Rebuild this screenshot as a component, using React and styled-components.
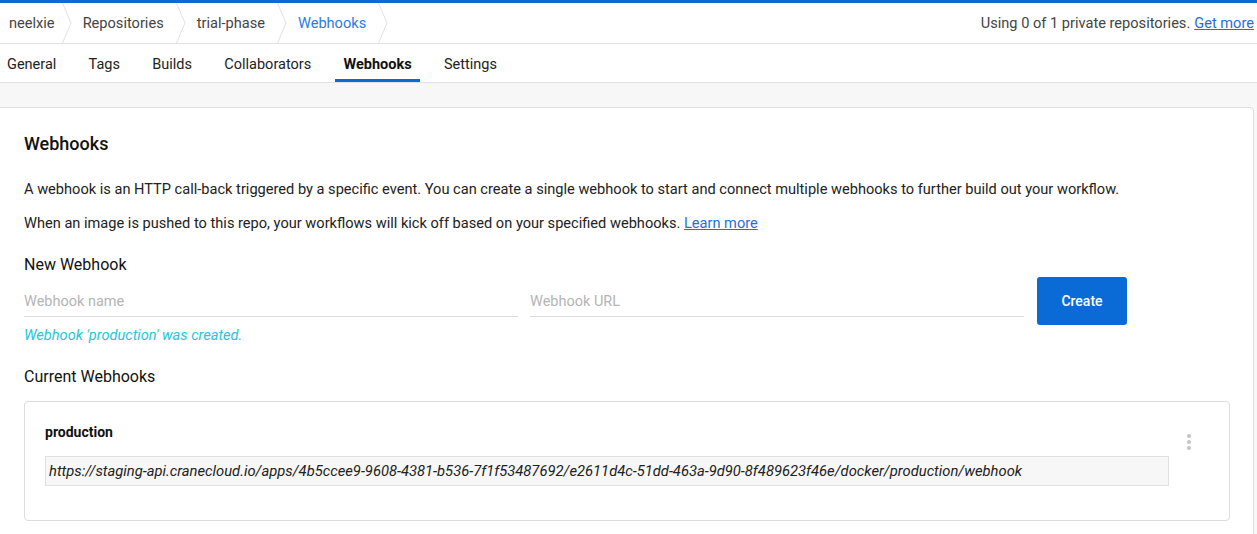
import React from "react";
import styled, { createGlobalStyle } from "styled-components";

const Global = createGlobalStyle`
  html, body { margin: 0; padding: 0; background: #f7f7f7; }
  body { font-family: Roboto, "Liberation Sans", sans-serif; color: #222; overflow: hidden; }
  * { box-sizing: border-box; }
`;

const Page = styled.div`
  border-top: 3px solid #0b6bd6;
  min-height: 534px;
  background: #f7f7f7;
`;

const TopBar = styled.div`
  display: flex;
  align-items: stretch;
  justify-content: space-between;
  height: 41px;
  background: #fff;
  border-bottom: 1px solid #e2e2e2;
`;

const Crumbs = styled.nav`
  display: flex;
  align-items: stretch;
`;

const Crumb = styled.div`
  display: flex;
  align-items: center;
  font-size: 14.6px;
  color: ${(p) => (p.$active ? "#2b7be4" : "#444")};
  padding-left: ${(p) => (p.$first ? "9px" : "11px")};
`;

const CrumbText = styled.span`
  padding-right: ${(p) => (p.$first ? "7px" : "12px")};
`;

const Chevron = styled.svg`
  display: block;
  width: 10px;
  height: 40px;
`;

const Usage = styled.div`
  display: flex;
  align-items: center;
  font-size: 14.6px;
  color: #444;
  padding-right: 3px;
  gap: 4px;
`;

const Link = styled.a`
  color: #1f6fd6;
  text-decoration: underline;
  cursor: pointer;
`;

const Tabs = styled.div`
  display: flex;
  background: #fff;
  border-bottom: 1px solid #e2e2e2;
  height: 39px;
  margin-left: -1px;
`;

const Tab = styled.div`
  display: flex;
  align-items: center;
  padding: 5px 8px 0;
  margin-right: 16.3px;
  font-size: 14.5px;
  font-weight: ${(p) => (p.$active ? 700 : 400)};
  color: ${(p) => (p.$active ? "#111" : "#222")};
  border-bottom: 3px solid ${(p) => (p.$active ? "#0b6bd6" : "transparent")};
`;

const Content = styled.div`
  padding-top: 24px;
  padding-right: 3px;
`;

const MainCard = styled.section`
  margin-left: -1px;
  background: #fff;
  border: 1px solid #ddd;
  border-radius: 0 4px 0 0;
  padding: 24px 24px 40px 24px;
  min-height: 430px;
`;

const Title = styled.h2`
  margin: 0;
  font-size: 18px;
  line-height: 24px;
  font-weight: 500;
  color: #111;
`;

const Text = styled.p`
  margin: ${(p) => (p.$first ? "22px" : "12px")} 0 0;
  font-size: 14.6px;
  line-height: 22px;
  color: #222;
`;

const SubTitle = styled.h3`
  margin: ${(p) => p.$mt || "19px"} 0 0;
  font-size: 16px;
  line-height: 24px;
  font-weight: 400;
  color: #111;
`;

const FormRow = styled.div`
  display: flex;
  align-items: flex-start;
  gap: 12px;
`;

const Input = styled.input`
  flex: 0 0 494px;
  height: 40px;
  border: none;
  border-bottom: 1px solid #ddd;
  padding: 9px 0 0;
  font-family: inherit;
  font-size: 14.5px;
  color: #222;
  outline: none;
  background: transparent;
  &::placeholder { color: #b5b5b5; }
`;

const Button = styled.button`
  width: 90px;
  height: 48px;
  margin-left: 1px;
  background: #0b6bd6;
  border: none;
  border-radius: 3px;
  color: #fff;
  font-family: inherit;
  font-size: 14px;
  font-weight: 500;
`;

const Success = styled.div`
  font-size: 14.6px;
  line-height: 20px;
  font-style: italic;
  color: #26c6d6;
`;

const HookCard = styled.div`
  margin-top: 12px;
  border: 1px solid #ddd;
  border-radius: 4px;
  padding: 20px 20px 34px 20px;
  display: flex;
  width: 1206px;
`;

const HookBody = styled.div`
  flex: 1;
`;

const HookName = styled.div`
  font-size: 14px;
  line-height: 20px;
  font-weight: 700;
  color: #111;
`;

const UrlBox = styled.div`
  margin-top: 14px;
  height: 30px;
  display: flex;
  align-items: center;
  padding-left: 3px;
  background: #f7f7f7;
  border: 1px solid #e0e0e0;
  font-size: 14.75px;
  font-style: italic;
  color: #222;
  white-space: nowrap;
  overflow: hidden;
`;

const Kebab = styled.div`
  flex: 0 0 40px;
  display: flex;
  flex-direction: column;
  align-items: center;
  gap: 2px;
  padding-top: 12px;
`;

const Dot = styled.span`
  width: 4px;
  height: 4px;
  border-radius: 50%;
  background: #c4c4c4;
`;

const crumbs = ["neelxie", "Repositories", "trial-phase", "Webhooks"];
const tabs = ["General", "Tags", "Builds", "Collaborators", "Webhooks", "Settings"];

export default function App() {
  return (
    <>
      <Global />
      <Page>
        <TopBar>
          <Crumbs>
            {crumbs.map((c, i) => (
              <Crumb key={c} $first={i === 0} $active={i === crumbs.length - 1}>
                <CrumbText $first={i === 0}>{c}</CrumbText>
                <Chevron viewBox="0 0 10 40">
                  <polyline points="0.5,0 9,20 0.5,40" fill="none" stroke="#e2e2e2" strokeWidth="1" />
                </Chevron>
              </Crumb>
            ))}
          </Crumbs>
          <Usage>
            <span>Using 0 of 1 private repositories.</span>
            <Link>Get more</Link>
          </Usage>
        </TopBar>
        <Tabs>
          {tabs.map((t) => (
            <Tab key={t} $active={t === "Webhooks"}>{t}</Tab>
          ))}
        </Tabs>
        <Content>
          <MainCard>
            <Title>Webhooks</Title>
            <Text $first>
              A webhook is an HTTP call-back triggered by a specific event. You can create a single webhook to start and connect multiple webhooks to further build out your workflow.
            </Text>
            <Text>
              When an image is pushed to this repo, your workflows will kick off based on your specified webhooks. <Link>Learn more</Link>
            </Text>
            <SubTitle>New Webhook</SubTitle>
            <FormRow>
              <Input placeholder="Webhook name" />
              <Input placeholder="Webhook URL" />
              <Button>Create</Button>
            </FormRow>
            <Success>Webhook 'production' was created.</Success>
            <SubTitle $mt="20px">Current Webhooks</SubTitle>
            <HookCard>
              <HookBody>
                <HookName>production</HookName>
                <UrlBox>
                  https://staging-api.cranecloud.io/apps/4b5ccee9-9608-4381-b536-7f1f53487692/e2611d4c-51dd-463a-9d90-8f489623f46e/docker/production/webhook
                </UrlBox>
              </HookBody>
              <Kebab>
                <Dot />
                <Dot />
                <Dot />
              </Kebab>
            </HookCard>
          </MainCard>
        </Content>
      </Page>
    </>
  );
}
